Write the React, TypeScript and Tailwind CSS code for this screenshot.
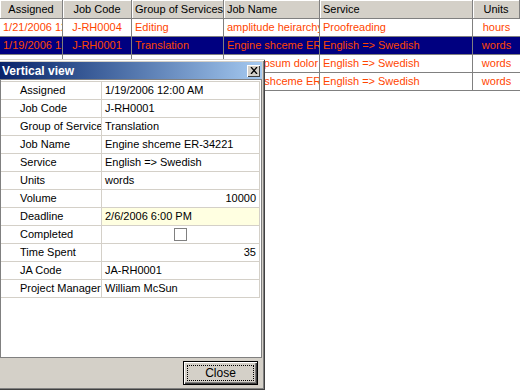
import React from 'react';

const cols = [
  { title: 'Assigned', w: 'w-[63px]', align: 'text-left pl-[3px]', head: 'justify-center' },
  { title: 'Job Code', w: 'w-[69px]', align: 'text-center', head: 'justify-center' },
  { title: 'Group of Services', w: 'w-[92px]', align: 'text-left pl-[3px]', head: 'justify-start pl-[3px]' },
  { title: 'Job Name', w: 'w-[96px]', align: 'text-left pl-[3px]', head: 'justify-start pl-[3px]' },
  { title: 'Service', w: 'w-[153px]', align: 'text-left pl-[3px]', head: 'justify-start pl-[3px]' },
  { title: 'Units', w: 'w-[47px]', align: 'text-center', head: 'justify-center' },
];

const rows = [
  ['1/21/2006 12:00 AM', 'J-RH0004', 'Editing', 'amplitude heirarchy model', 'Proofreading', 'hours'],
  ['1/19/2006 12:00 AM', 'J-RH0001', 'Translation', 'Engine shceme ER-34221', 'English => Swedish', 'words'],
  ['1/16/2006 12:00 AM', 'J-RH0002', 'Translation', 'Lorem ipsum dolor sit amet', 'English => Swedish', 'words'],
  ['1/12/2006 12:00 AM', 'J-RH0003', 'Translation', 'Engine shceme ER-34221', 'English => Swedish', 'words'],
];

type Prop = { label: string; value?: string; right?: boolean; yellow?: boolean; check?: boolean };

const props: Prop[] = [
  { label: 'Assigned', value: '1/19/2006 12:00 AM' },
  { label: 'Job Code', value: 'J-RH0001' },
  { label: 'Group of Services', value: 'Translation' },
  { label: 'Job Name', value: 'Engine shceme ER-34221' },
  { label: 'Service', value: 'English => Swedish' },
  { label: 'Units', value: 'words' },
  { label: 'Volume', value: '10000', right: true },
  { label: 'Deadline', value: '2/6/2006 6:00 PM', yellow: true },
  { label: 'Completed', check: true },
  { label: 'Time Spent', value: '35', right: true },
  { label: 'JA Code', value: 'JA-RH0001' },
  { label: 'Project Manager', value: 'William McSun' },
];

const App: React.FC = () => {
  return (
    <div className="relative w-[520px] h-[391px] bg-white overflow-hidden font-['Liberation_Sans',sans-serif] text-[11px] text-black">
      {/* grid */}
      <div className="flex flex-col">
        <div className="flex h-[19px] bg-[#d4d0c8]">
          {cols.map((c) => (
            <div
              key={c.title}
              className={`${c.w} ${c.head} shrink-0 flex items-center border-r border-b border-[#808080] shadow-[inset_1px_1px_0_#fff] whitespace-nowrap overflow-hidden`}
            >
              {c.title}
            </div>
          ))}
        </div>
        {rows.map((r, i) => (
          <div key={i} className={`flex h-[18px] ${i === 1 ? 'bg-[#000080]' : 'bg-white'}`}>
            {r.map((v, j) => (
              <div
                key={j}
                className={`${cols[j].w} ${cols[j].align} shrink-0 leading-[17px] border-r border-b border-[#808080] text-[#ff4500] whitespace-nowrap overflow-hidden ${j === 5 ? 'border-r-0' : ''}`}
              >
                {v}
              </div>
            ))}
          </div>
        ))}
      </div>

      {/* dialog */}
      <div className="absolute left-[-3px] top-[59px] w-[268px] h-[331px] bg-[#d4d0c8] p-[3px] flex flex-col shadow-[inset_1px_1px_0_#d4d0c8,inset_-1px_-1px_0_#404040,inset_2px_2px_0_#fff,inset_-2px_-2px_0_#808080]">
        <div className="h-[17px] shrink-0 flex items-center justify-between bg-gradient-to-r from-[#0a246a] to-[#a6caf0] pl-[2px] pr-[2px]">
          <span className="text-white font-bold text-[12px]">Vertical view</span>
          <div className="w-[13px] h-[12px] bg-[#d4d0c8] flex items-center justify-center shadow-[inset_1px_1px_0_#fff,inset_-1px_-1px_0_#404040]">
            <svg width="8" height="7" viewBox="0 0 8 7">
              <path d="M1 0 L7 7 M7 0 L1 7" stroke="#000" strokeWidth="1.3" />
            </svg>
          </div>
        </div>
        <div className="flex-1 bg-white border border-[#808080] pt-[1px] pr-[1px]">
          <div className="flex flex-col border-r border-[#d4d0c8]">
            {props.map((p) => (
              <div key={p.label} className="flex h-[18px] border-t border-[#d4d0c8]">
                <div className="w-[101px] shrink-0 pl-[19px] leading-[17px] border-r border-[#d4d0c8] whitespace-nowrap overflow-hidden">
                  {p.label}
                </div>
                <div
                  className={`flex-1 leading-[17px] px-[3px] flex items-center whitespace-nowrap overflow-hidden ${p.right ? 'justify-end' : ''} ${p.yellow ? 'bg-[#ffffe1]' : ''} ${p.check ? 'justify-center' : ''}`}
                >
                  {p.check ? <div className="w-[13px] h-[13px] border border-[#808080] bg-white" /> : p.value}
                </div>
              </div>
            ))}
            <div className="border-t border-[#d4d0c8]" />
          </div>
        </div>
        <div className="h-[29px] shrink-0 flex items-center justify-end pr-[4px]">
          <button className="w-[75px] h-[24px] border border-black bg-[#d4d0c8] shadow-[inset_1px_1px_0_#fff,inset_-1px_-1px_0_#404040,inset_-2px_-2px_0_#808080] p-[3px] mt-[1px]">
            <div className="w-full h-full border border-dotted border-black flex items-center justify-center text-[12px]">Close</div>
          </button>
        </div>
      </div>
    </div>
  );
};

export default App;
